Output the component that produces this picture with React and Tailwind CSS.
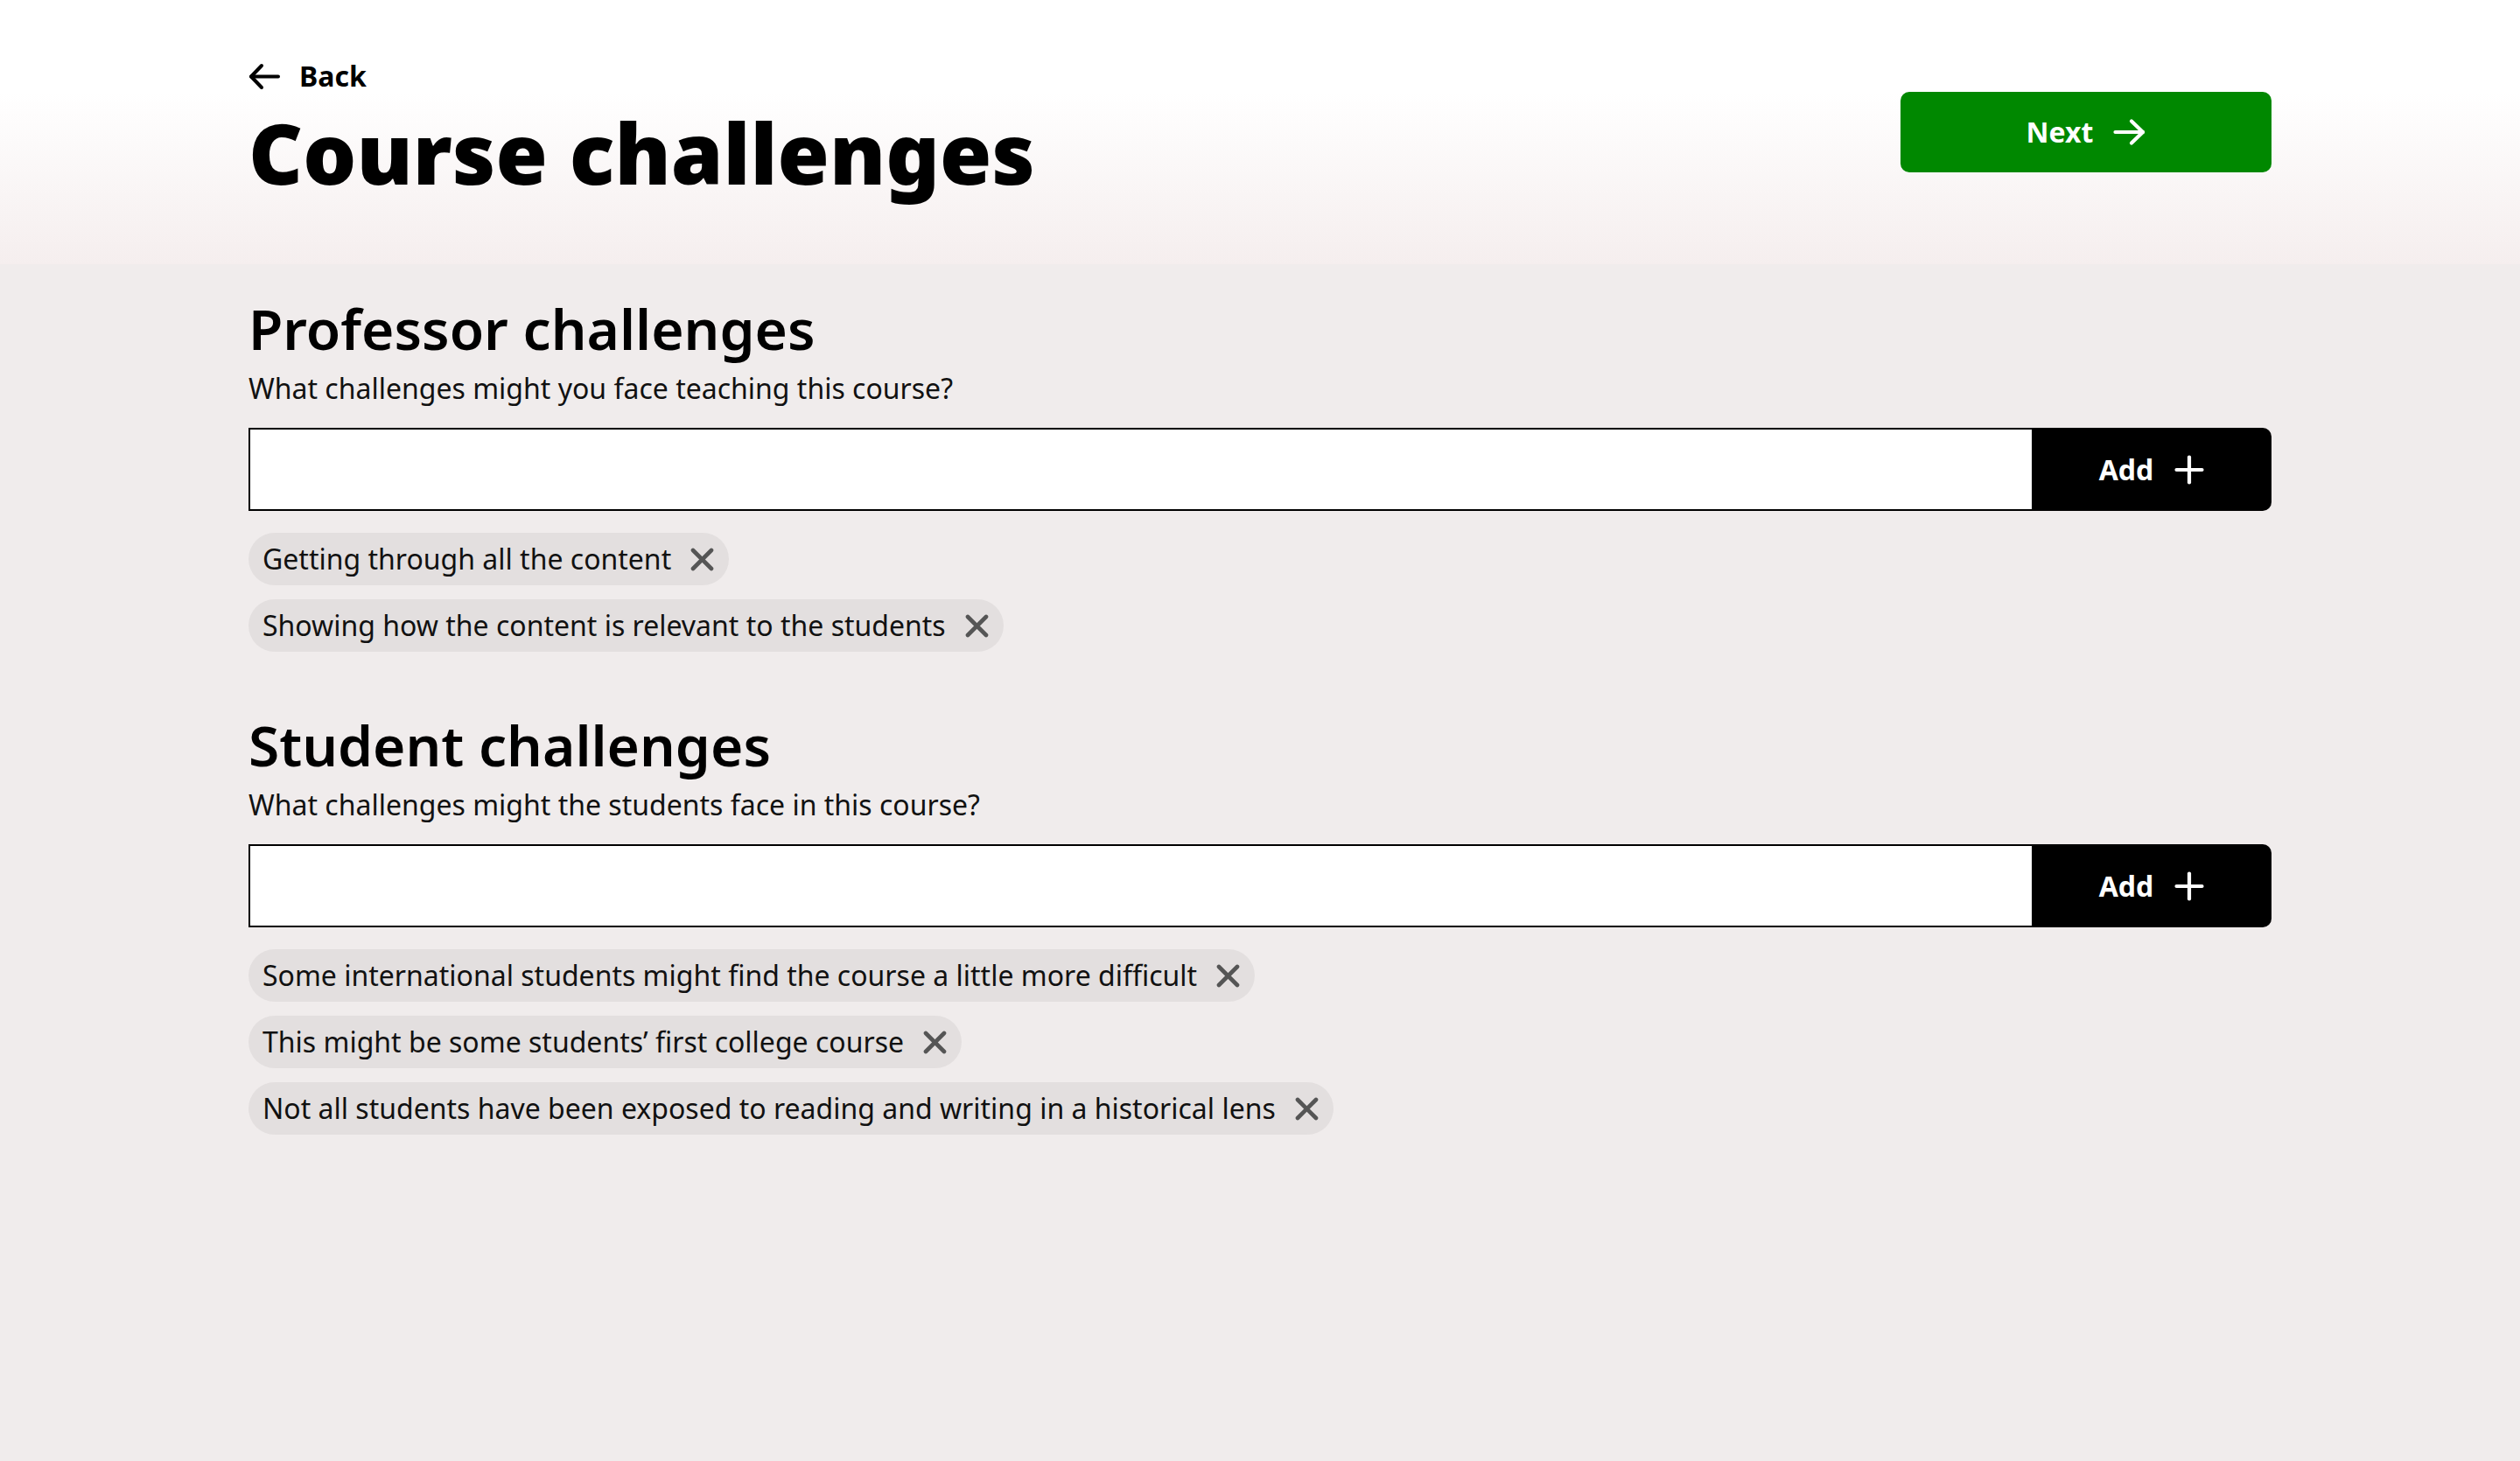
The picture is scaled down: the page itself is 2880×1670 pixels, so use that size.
import { useState } from 'react';

const ArrowLeft = () => (
    <svg width="36" height="31" viewBox="0 0 36 31" fill="none" stroke="currentColor" strokeWidth="4" strokeLinecap="round" strokeLinejoin="round">
        <path d="M34 15.5H3" />
        <path d="M15 3L3 15.5L15 28" />
    </svg>
);

const ArrowRight = () => (
    <svg width="37" height="32" viewBox="0 0 37 32" fill="none" stroke="currentColor" strokeWidth="4.2" strokeLinecap="round" strokeLinejoin="round">
        <path d="M2.5 16H34" />
        <path d="M21 3.5L34 16L21 28.5" />
    </svg>
);

const PlusIcon = () => (
    <svg width="34" height="34" viewBox="0 0 34 34" fill="none" stroke="currentColor" strokeWidth="4.2" strokeLinecap="round">
        <path d="M17 2.5V31.5" />
        <path d="M2.5 17H31.5" />
    </svg>
);

const CloseIcon = () => (
    <svg width="27" height="27" viewBox="0 0 27 27" fill="none" stroke="currentColor" strokeWidth="4.6" strokeLinecap="round">
        <path d="M3 3L24 24" />
        <path d="M24 3L3 24" />
    </svg>
);

const Chip = ({ label, onRemove }) => (
    <div className="flex h-[60px] items-center rounded-full bg-[#e3dfdf] pl-4 pr-[17px]">
        <span className="text-[32px] leading-none text-[#111]">{label}</span>
        <button type="button" onClick={onRemove} className="ml-[22px] text-[#555]">
            <CloseIcon />
        </button>
    </div>
);

const ChallengeSection = ({ title, question, items, setItems, className }) => {
    const [value, setValue] = useState('');

    const handleAdd = () => {
        if (!value.trim()) return;
        setItems(prev => [...prev, value.trim()]);
        setValue('');
    };

    return (
        <section className={className}>
            <h2 className="text-[64px] font-semibold leading-none text-black">{title}</h2>
            <p className="mt-[20px] text-[32px] leading-none text-[#111]">{question}</p>

            {/* Input + Add */}
            <div className="mt-[29px] flex h-[95px]">
                <input
                    type="text"
                    value={value}
                    onChange={e => setValue(e.target.value)}
                    className="h-full flex-1 border-2 border-r-0 border-black bg-white px-5 text-[32px] outline-none"
                />
                <button
                    type="button"
                    onClick={handleAdd}
                    className="flex h-full w-[274px] items-center justify-center gap-6 rounded-r-[10px] bg-black text-white"
                >
                    <span className="text-[32px] font-bold leading-none">Add</span>
                    <PlusIcon />
                </button>
            </div>

            {/* Chips */}
            <div className="mt-[25px] flex flex-col items-start gap-4">
                {items.map((item, i) => (
                    <Chip
                        key={item}
                        label={item}
                        onRemove={() => setItems(prev => prev.filter((_, idx) => idx !== i))}
                    />
                ))}
            </div>
        </section>
    );
};

export default function App() {
    const [professorItems, setProfessorItems] = useState([
        'Getting through all the content',
        'Showing how the content is relevant to the students',
    ]);
    const [studentItems, setStudentItems] = useState([
        'Some international students might find the course a little more difficult',
        'This might be some students\u2019 first college course',
        'Not all students have been exposed to reading and writing in a historical lens',
    ]);

    return (
        <div className="min-h-screen bg-[#f0ecec] font-['Noto_Sans',sans-serif] text-black">
            {/* Header */}
            <header className="h-[302px] bg-[linear-gradient(to_bottom,#ffffff_35%,#f5eeee_100%)] px-[284px] pt-[71px]">
                <div className="flex items-start justify-between">
                    <div>
                        <button type="button" className="flex h-8 items-center gap-[22px] text-black">
                            <ArrowLeft />
                            <span className="text-[32px] font-bold leading-none">Back</span>
                        </button>
                        <h1 className="mt-[23px] text-[96px] font-black leading-none">
                            Course challenges
                        </h1>
                    </div>
                    <button
                        type="button"
                        className="mt-[34px] flex h-[92px] w-[424px] items-center justify-center gap-[23px] rounded-[10px] bg-[#008800] text-white"
                    >
                        <span className="text-[32px] font-bold leading-none">Next</span>
                        <ArrowRight />
                    </button>
                </div>
            </header>

            {/* Body */}
            <main className="px-[284px] pb-24 pt-[42px]">
                <ChallengeSection
                    title="Professor challenges"
                    question="What challenges might you face teaching this course?"
                    items={professorItems}
                    setItems={setProfessorItems}
                />
                <ChallengeSection
                    className="mt-[75px]"
                    title="Student challenges"
                    question="What challenges might the students face in this course?"
                    items={studentItems}
                    setItems={setStudentItems}
                />
            </main>
        </div>
    );
}
